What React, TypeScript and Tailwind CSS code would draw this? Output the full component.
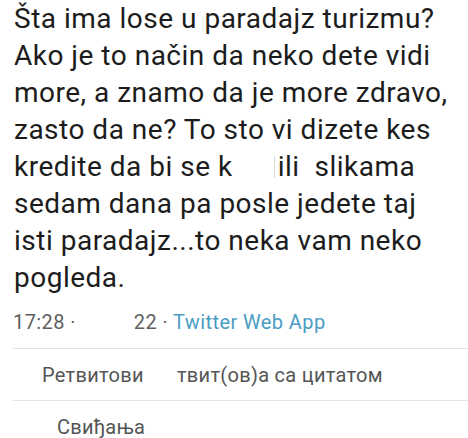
import React from "react";

const lines = [
  "Šta ima lose u paradajz turizmu?",
  "Ako je to način da neko dete vidi",
  "more, a znamo da je more zdravo,",
  "zasto da ne? To sto vi dizete kes",
];
const lines2 = [
  "sedam dana pa posle jedete taj",
  "isti paradajz...to neka vam neko",
  "pogleda.",
];

export default function App() {
  return (
    <div
      className="w-[468px] h-[438px] bg-white overflow-hidden"
      style={{ fontFamily: "Roboto, 'Noto Sans', sans-serif" }}
    >
      <div className="pl-[14px] text-[28px] leading-[37px] tracking-[0.5px] text-[#1c1c1c]">
        {lines.map((l) => (
          <div key={l} className="whitespace-nowrap">{l}</div>
        ))}
        <div className="whitespace-nowrap flex items-center">
          <span>kredite da bi se k</span>
          <span className="inline-block w-[45px] h-[37px] relative">
            <span className="absolute right-[3px] top-[8px] w-px h-[22px] bg-[#d8d8d8]" />
          </span>
          <span>ili&nbsp; slikama</span>
        </div>
        {lines2.map((l) => (
          <div key={l} className="whitespace-nowrap">{l}</div>
        ))}
      </div>
      <div className="mt-[14px] pl-[13px] text-[20px] leading-[24px] tracking-[0.4px] text-[#5f5f5f] flex whitespace-nowrap">
        <span>17:28 ·</span>
        <span className="ml-[58px]">22 · </span>
        <span className="ml-[5px] text-[#4a9cc4]">Twitter Web App</span>
      </div>
      <div className="mt-[14px] ml-[13px] h-px bg-[#e4e4e4]" />
      <div className="pt-[14px] pb-[13px] text-[20px] leading-[24px] tracking-[0.3px] text-[#555] flex whitespace-nowrap">
        <span className="ml-[42px]">Ретвитови</span>
        <span className="ml-[33px]">твит(ов)а са цитатом</span>
      </div>
      <div className="ml-[13px] h-px bg-[#e4e4e4]" />
      <div className="pt-[14px] text-[20px] leading-[24px] tracking-[0.3px] text-[#555] whitespace-nowrap">
        <span className="ml-[57px]">Свиђања</span>
      </div>
    </div>
  );
}
